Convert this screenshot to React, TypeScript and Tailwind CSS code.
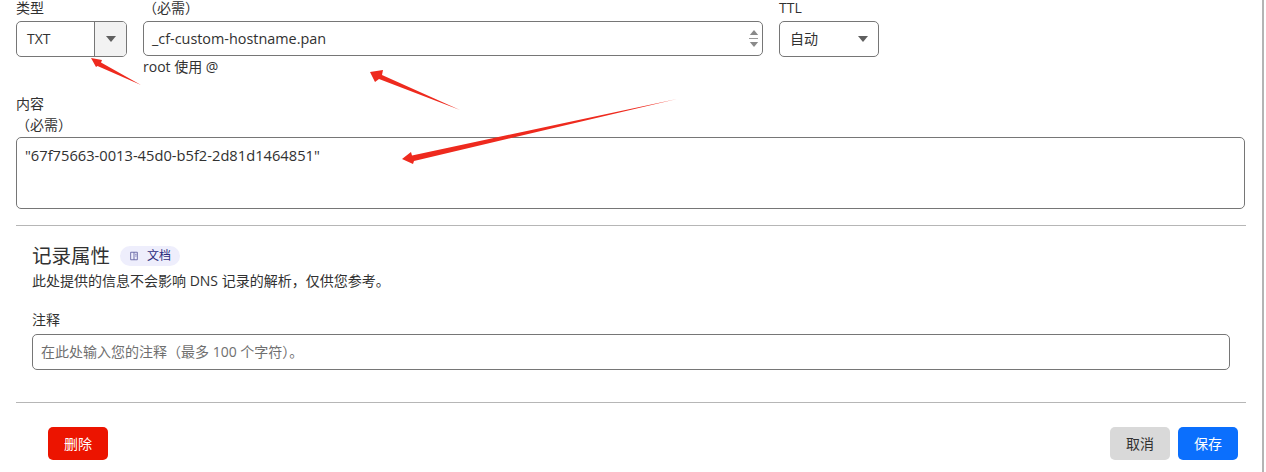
const font = "font-['Open_Sans','Noto_Sans_CJK_SC',sans-serif]";

function CaretDown({ className }: { className?: string }) {
  return (
    <svg viewBox="0 0 10 6" className={className} fill="#5f5f5f">
      <path d="M0 0h10L5 6z" />
    </svg>
  );
}

function Arrows() {
  return (
    <svg className="pointer-events-none absolute left-0 top-0" width="1266" height="472" fill="#ee2a1e">
      <path d="M91 58 L102 60 L101 62.5 L141 85 L97.5 66 L96 67 Z" />
      <path d="M370 72 L383 70 L382 75 L460 110 L379 79 L375 82 Z" />
      <path d="M402 159 L411 152 L412 155.5 L677 99 L414 161 L413 164 Z" />
    </svg>
  );
}

function Button({ label, className }: { label: string; className: string }) {
  return (
    <button className={`h-[33px] w-[60px] rounded-[5px] text-sm ${className}`}>{label}</button>
  );
}

export default function App() {
  return (
    <div className={`relative h-[472px] w-[1266px] overflow-hidden bg-white text-[#313131] ${font}`}>
      <div className="h-full w-[1264px] border-r-2 border-[#b4b4b4] pl-4">
        <div className="flex gap-4">
          <div className="w-[111px]">
            <div className="h-[21px] text-sm leading-[15px]">类型</div>
            <div className="flex h-9 overflow-hidden rounded-[5px] border border-[#767676]">
              <div className="flex-1 pl-[10px] text-sm leading-[34px]">TXT</div>
              <div className="flex w-[32px] items-center justify-center border-l border-[#767676] bg-[#f2f2f2]">
                <CaretDown className="h-[6px] w-[10px]" />
              </div>
            </div>
          </div>
          <div className="w-[620px]">
            <div className="h-[21px] text-sm leading-[15px]">（必需）</div>
            <div className="flex h-[35px] items-center justify-between rounded-[5px] border border-[#767676] pl-[8px] pr-[3px]">
              <span className="text-[14.4px]">_cf-custom-hostname.pan</span>
              <div className="flex w-[11px] flex-col items-center gap-[3px]">
                <svg viewBox="0 0 10 6" className="h-[5px] w-[10px]" fill="#8a8a8a"><path d="M0 6h10L5 0z" /></svg>
                <div className="h-px w-[9px] bg-[#9a9a9a]" />
                <svg viewBox="0 0 10 6" className="h-[5px] w-[10px]" fill="#8a8a8a"><path d="M0 0h10L5 6z" /></svg>
              </div>
            </div>
            <div className="mt-[1px] text-sm leading-[20px]">root 使用 @</div>
          </div>
          <div className="w-[100px]">
            <div className="h-[21px] text-sm leading-[15px]">TTL</div>
            <div className="flex h-9 items-center justify-between rounded-[5px] border border-[#767676] pl-[10px] pr-[10px]">
              <span className="text-sm">自动</span>
              <CaretDown className="h-[6px] w-[10px]" />
            </div>
          </div>
        </div>

        <div className="mt-[16px] text-sm leading-[21px]">内容</div>
        <div className="text-sm leading-[21px]">（必需）</div>
        <div className="mt-[2px] h-[72px] w-[1229px] rounded-[5px] border border-[#767676] px-2 py-[6px] text-[14.7px]">
          "67f75663-0013-45d0-b5f2-2d81d1464851"
        </div>

        <div className="mt-4 w-[1230px] border-t border-[#b6b6b6]" />

        <div className="px-4">
          <div className="mt-[17px] flex items-center gap-[10px]">
            <h2 className="text-[19.5px] leading-[26px]">记录属性</h2>
            <span className="flex h-5 w-[60px] items-center justify-center gap-2 rounded-full bg-[#eeeefc] text-xs text-[#2c2c7c]">
              <svg viewBox="0 0 12 12" className="h-[10px] w-[10px]" fill="none" stroke="#5a5a9c" strokeWidth="1">
                <path d="M2 1.5h8v9H2zM6 1.5v9M7.5 4h1.5M7.5 6h1.5" />
              </svg>
              文档
            </span>
          </div>
          <p className="mt-[2px] text-sm leading-[19px]">此处提供的信息不会影响 DNS 记录的解析，仅供您参考。</p>
          <div className="mt-[21px] text-sm leading-[18px]">注释</div>
          <div className="mt-[5px] h-9 w-[1198px] rounded-[5px] border border-[#767676] pl-2 text-sm leading-[34px] text-[#6f6f6f]">
            在此处输入您的注释（最多 100 个字符）。
          </div>
        </div>

        <div className="mt-8 w-[1230px] border-t border-[#b6b6b6]" />

        <div className="mt-6 flex w-[1222px] items-center pl-8">
          <Button label="删除" className="bg-[#ec1400] text-white" />
          <div className="flex-1" />
          <Button label="取消" className="bg-[#d9d9d9] text-[#313131]" />
          <Button label="保存" className="ml-2 bg-[#0b6ffd] text-white" />
        </div>
      </div>
      <Arrows />
    </div>
  );
}
